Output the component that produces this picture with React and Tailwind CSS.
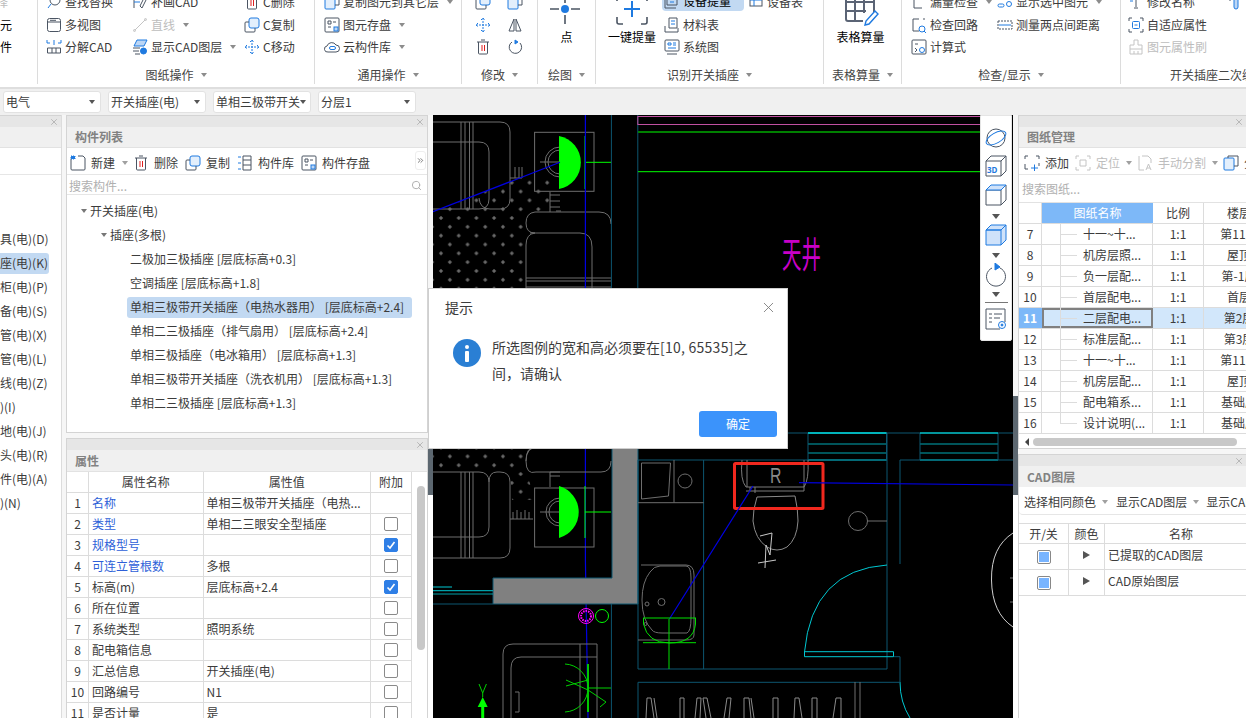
import { Search, X, ChevronsRight } from 'lucide-react';

const D = '#4b5563';
const B = '#1f7ae0';
const G = '#c4c4c4';

// 16px line icon wrapper
const Ic = ({ children, size = 16, className = '' }) => (
  <svg width={size} height={size} viewBox="0 0 16 16" fill="none" stroke={D} strokeWidth="1" className={`shrink-0 ${className}`}>
    {children}
  </svg>
);

const icons = {
  find: <Ic><circle cx="9" cy="6" r="5" /><path d="M5 10l-3 4M2 3l2-2" stroke={B} /></Ic>,
  view: <Ic><rect x="1.5" y="1.5" width="13" height="13" rx="2" /><path d="M1.5 5h13M4 3.3h6" /></Ic>,
  explode: <Ic><path d="M1.5 9h13v5h-13zM6 9v5M10 9v5" /><path d="M1 1v3h3M15 1v3h-3M8 1v5" stroke={B} /></Ic>,
  library: <Ic><path d="M6 1h8v14H6zM6 5h8M6 10h8" /><path d="M1 2h3M1 8h3M1 14h3" stroke={B} /></Ic>,
  patch: <Ic><path d="M2 2v12M10 14l4-8-2-2-4 8z" /><path d="M2 8h6" stroke={B} /></Ic>,
  line: <Ic><path d="M2.5 13.5l11-11" stroke={G} /><circle cx="2.5" cy="13.5" r="1" stroke={G} /><circle cx="13.5" cy="2.5" r="1" stroke={G} /></Ic>,
  layer: <Ic><path d="M5 1h10l-3 6H2z" fill="#bcd6f5" stroke={B} /><path d="M1 9h7M1 12h6M3 15h5" /><circle cx="11.5" cy="12" r="3" fill={B} stroke={B} /></Ic>,
  del: <Ic><path d="M2 3h12M6 1h4M3.5 3v11a1 1 0 001 1h7a1 1 0 001-1V3" /><path d="M7 6v6M9.5 6v6" stroke="#e02020" /></Ic>,
  copy: <Ic><rect x="5" y="1" width="10" height="10" rx="2" fill="#e3effc" stroke={B} /><path d="M5 5H2a1 1 0 00-1 1v8a1 1 0 001 1h8a1 1 0 001-1v-3" /></Ic>,
  move: <Ic><path d="M8 1v14M1 8h14M6 3l2-2 2 2M6 13l2 2 2-2M3 6L1 8l2 2M13 6l2 2-2 2" stroke={B} strokeDasharray="2 1" /></Ic>,
  dup: <Ic><rect x="1" y="3" width="10" height="12" rx="1" fill="#e3effc" stroke={B} /><path d="M5 3V1h10v10h-4" /></Ic>,
  save: <Ic><rect x="1" y="1" width="14" height="14" rx="1" /><path d="M4 4h3v3H4zM9 5h3M4 10h3" /><rect x="10" y="10" width="4" height="4" fill="#bcd6f5" stroke={B} /></Ic>,
  create: <Ic><path d="M4 3H2a1 1 0 00-1 1v10a1 1 0 001 1h12a1 1 0 001-1V3l-2-2H8" /><path d="M1 1h4v3H1z" fill={B} stroke={B} strokeDasharray="1 1" /></Ic>,
  cloud: <Ic><path d="M4 13h8a3.5 3.5 0 000-7 5 5 0 00-9 1 3 3 0 001 6z" /><rect x="5.5" y="7.5" width="6" height="3" rx="1.5" stroke={B} /></Ic>,
  mirror: <Ic><path d="M7 2L2 14h5zM9 2l5 12H9z" /></Ic>,
  rotate: <Ic><path d="M5 3a6.2 6.2 0 108 1" /><path d="M8 1l3 2-3 2z" fill={B} stroke={B} /></Ic>,
  sheet: <Ic><path d="M3 1h8l2 2v9H3zM1 5v10h11" /><path d="M6 6h4M6 9h4" stroke={B} /></Ic>,
  table: <Ic><rect x="2" y="3" width="12" height="9" /><path d="M2 6h12M6 3v9" stroke={B} /></Ic>,
  material: <Ic><path d="M5 1h8v10H5zM1 9v6h13v-4" /><path d="M7 4h4M7 7h4" stroke={B} /></Ic>,
  system: <Ic><rect x="1" y="1" width="14" height="11" rx="1" /><path d="M4 4h3v2H4zM9 4h3M9 6h3M4 9h8" stroke={B} /><path d="M3 15h10" /></Ic>,
  check: <Ic><path d="M3 1v13h8" /><path d="M7 2l2 3 4-4" stroke={B} /></Ic>,
  loop: <Ic><path d="M2 2h6M2 2v12h6M12 2h2" /><circle cx="11" cy="12" r="3" stroke={B} /><path d="M13 14l2 2" stroke={B} /></Ic>,
  calc: <Ic><rect x="1" y="1" width="14" height="14" rx="1" /><path d="M4 5h3M4 9l2 2-2 2" /><circle cx="11" cy="11" r="2.5" stroke={B} /></Ic>,
  show: <Ic><rect x="1" y="2" width="6" height="3" rx="1.5" /><rect x="1" y="10" width="6" height="3" rx="1.5" stroke={B} /><circle cx="12" cy="10" r="2.5" stroke={B} /></Ic>,
  measure: <Ic><path d="M1 4h14v8H1z" strokeDasharray="2 1" /><path d="M2 8h12" stroke={B} /></Ic>,
  rename: <Ic><path d="M2 3V1h12v2M8 1v12M6 14h4" /><path d="M2 7h3" stroke={B} /></Ic>,
  fit: <Ic><path d="M1 4V1h3M12 1h3v3M15 12v3h-3M4 15H1v-3" /><rect x="4.5" y="4.5" width="7" height="7" rx="1" stroke={B} /><path d="M6.5 8h3" stroke={B} /></Ic>,
  add: <Ic><path d="M1 4V1h3M12 1h3v3M15 8v3M1 9v5h3" /><path d="M7 13h7M10.5 9.5v7" stroke={B} /></Ic>,
  locate: <Ic><path d="M1 4V1h3M12 1h3v3M15 12v3h-3M4 15H1v-3M5 5h6v6H5z" stroke={G} /></Ic>,
  split: <Ic><path d="M5 1h6l3 3v4M2 1v14h5" stroke={G} /><path d="M9 15l2.5-6 2.5 6M10 13h3" stroke={G} /></Ic>,
  brush: <Ic><path d="M6 1h4v5h4v4H2V6h4zM2 10v5h12v-5M6 12v3M10 12v3" stroke={G} /></Ic>,
  side: <Ic><rect x="6" y="1" width="4" height="14" rx="2" stroke={B} fill="#bcd6f5" /><path d="M2 2v5" /></Ic>,
  point: (
    <svg width="32" height="32" viewBox="0 0 32 32" className="shrink-0">
      <circle cx="16" cy="16" r="4" fill={B} />
      <path d="M1 16h9M22 16h9M16 1v9M16 22v9" stroke={D} strokeWidth="1.6" />
    </svg>
  ),
  oneKey: (
    <svg width="32" height="32" viewBox="0 0 32 32" fill="none" className="shrink-0" stroke={D} strokeWidth="1.6">
      <path d="M1 8V3a2 2 0 012-2h4M25 1h4a2 2 0 012 2v5M31 24v5a2 2 0 01-2 2h-4M7 31H3a2 2 0 01-2-2v-5" />
      <path d="M16 8v16M8 16h16" stroke={B} strokeWidth="2" />
    </svg>
  ),
  tableBig: (
    <svg width="36" height="38" viewBox="0 0 36 38" fill="none" className="shrink-0">
      <path d="M2 2h28v19M2 2v26a2 2 0 002 2h15M2 11h28M2 20h20M11 2v28M20 2v20" stroke="#5b6475" strokeWidth="2" />
      <path d="M21 34l1-4 9-10 3 3-9 10z" stroke={B} strokeWidth="1.4" />
    </svg>
  )
};

const Caret = ({ className = 'border-t-[#8c8c8c]' }) => (
  <span className={`inline-block w-0 h-0 border-x-[3px] border-x-transparent border-t-[4px] ${className}`} />
);

const Tool = ({ icon, text, arrow, disabled }) => (
  <div className={`h-[22.5px] flex items-center gap-[3px] whitespace-nowrap ${disabled ? 'text-[#bdbdbd]' : 'text-[#3c3c3c]'}`}>
    {icons[icon]}
    <span>{text}</span>
    {arrow && <Caret className="border-t-[#8c8c8c] ml-[5px]" />}
  </div>
);

const Group = ({ w, label, pl, children }) => (
  <div className={`${w} shrink-0 h-[84px] border-r border-[#dcdcdc] flex flex-col`}>
    <div className={`-mt-[9px] h-[75px] flex ${pl}`}>{children}</div>
    <div className="h-[18px] flex items-center justify-center gap-[7px] text-[#444] whitespace-nowrap">
      {label}
      {label && <Caret className="border-t-[#8c8c8c]" />}
    </div>
  </div>
);

const Ribbon = () => (
  <div className="h-[89px] shrink-0 border-b-2 border-[#dedede] bg-white flex overflow-hidden">
    <Group w="w-[38px]" label="" pl="pl-0">
      <div className="flex flex-col -ml-[16px]">
        <div className="h-[22.5px] flex items-center text-[#bdbdbd]">选择</div>
        <div className="h-[22.5px] flex items-center pl-[4px]">图元</div>
        <div className="h-[22.5px] flex items-center pl-[4px]">构件</div>
      </div>
    </Group>
    <Group w="w-[277px]" label="图纸操作" pl="pl-[8px]">
      <div className="w-[86px]">
        <Tool icon="find" text="查找替换" />
        <Tool icon="view" text="多视图" />
        <Tool icon="explode" text="分解CAD" />
      </div>
      <div className="w-[112px]">
        <Tool icon="patch" text="补画CAD" />
        <Tool icon="line" text="直线" arrow disabled />
        <Tool icon="layer" text="显示CAD图层" arrow />
      </div>
      <div>
        <Tool icon="del" text="C删除" />
        <Tool icon="copy" text="C复制" />
        <Tool icon="move" text="C移动" />
      </div>
    </Group>
    <Group w="w-[147px]" label="通用操作" pl="pl-[9px]">
      <div>
        <Tool icon="dup" text="复制图元到其它层" arrow />
        <Tool icon="save" text="图元存盘" arrow />
        <Tool icon="cloud" text="云构件库" arrow />
      </div>
    </Group>
    <Group w="w-[76px]" label="修改" pl="pl-[13px]">
      <div className="w-[32px]">
        <Tool icon="copy" />
        <Tool icon="move" />
        <Tool icon="del" />
      </div>
      <div>
        <Tool icon="dup" />
        <Tool icon="mirror" />
        <Tool icon="rotate" />
      </div>
    </Group>
    <Group w="w-[58px]" label="绘图" pl="pl-0">
      <div className="w-full flex flex-col items-center gap-[3px]">
        <div className="mt-[2px] -ml-[4px]">{icons.point}</div>
        <span>点</span>
      </div>
    </Group>
    <Group w="w-[228px]" label="识别开关插座" pl="pl-[7px]">
      <div className="w-[61px] flex flex-col items-center gap-[3px]">
        <div className="mt-[2px] -ml-[3px]">{icons.oneKey}</div>
        <span className="whitespace-nowrap -ml-[3px]">一键提量</span>
      </div>
      <div className="w-[84px]">
        <div className="-ml-[2px] w-[82px] h-[20px] pl-[2px] bg-[#c2d9f2] rounded-sm flex items-center gap-[3px] mb-[2.5px]">
          {icons.sheet}
          <span>设备提量</span>
        </div>
        <Tool icon="material" text="材料表" />
        <Tool icon="system" text="系统图" />
      </div>
      <div>
        <Tool icon="table" text="设备表" />
      </div>
    </Group>
    <Group w="w-[78px]" label="表格算量" pl="pl-0">
      <div className="w-full flex flex-col items-center -ml-[2px]">
        <div className="h-[36px] ml-[2px]">{icons.tableBig}</div>
        <span className="mt-[1px]">表格算量</span>
      </div>
    </Group>
    <Group w="w-[219px]" label="检查/显示" pl="pl-[9px]">
      <div className="w-[86px]">
        <Tool icon="check" text="漏量检查" arrow />
        <Tool icon="loop" text="检查回路" />
        <Tool icon="calc" text="计算式" />
      </div>
      <div>
        <Tool icon="show" text="显示选中图元" arrow />
        <Tool icon="measure" text="测量两点间距离" />
      </div>
    </Group>
    <Group w="w-[208px]" label="开关插座二次编辑" pl="pl-[7px]">
      <div className="w-[100px]">
        <Tool icon="rename" text="修改名称" />
        <Tool icon="fit" text="自适应属性" />
        <Tool icon="brush" text="图元属性刷" disabled />
      </div>
      <div>
        <Tool icon="side" />
      </div>
    </Group>
  </div>
);

const Select = ({ text }) => (
  <div className="w-[98px] h-[22px] bg-white border border-[#e2e2e2] rounded-[3px] pl-[2px] pr-[5px] flex items-center justify-between whitespace-nowrap text-[#3c3c3c] overflow-hidden">
    <span>{text}</span>
    <Caret className="border-t-[#555] shrink-0" />
  </div>
);

const SelectBar = () => (
  <div className="h-[26px] shrink-0 bg-[#f0f0f0] flex items-center gap-[7px] pl-[3px]">
    <Select text="电气" />
    <Select text="开关插座(电)" />
    <Select text="单相三极带开关" />
    <Select text="分层1" />
  </div>
);

const TitleStrip = () => (
  <div className="h-[12px] shrink-0 bg-[#e6e6e6] border-t border-[#d4d4d4] flex items-center justify-end pr-[2px]">
    <X size={10} color="#a0a0a0" strokeWidth={1.6} />
  </div>
);

const Header = ({ text, h = 'h-[21px]' }) => (
  <div className={`${h} shrink-0 bg-[#f0f0f0] border-b border-[#e2e2e2] flex items-center pl-[8px] text-[#828282] font-bold`}>
    {text}
  </div>
);

const leftRows = ['具(电)(D)', '座(电)(K)', '柜(电)(P)', '备(电)(S)', '管(电)(X)', '管(电)(L)', '线(电)(Z)', ')(I)', '地(电)(J)', '头(电)(R)', '件(电)(A)', ')(N)'];

const LeftColumn = () => (
  <div className="w-[62px] shrink-0 flex flex-col bg-white border-r border-[#dcdcdc] overflow-hidden">
    <TitleStrip />
    <Header text="" />
    <div className="h-[27px] shrink-0 border-b border-[#e6e6e6]" />
    <div className="pt-[52px] pr-[12px]">
      {leftRows.map((t) => (
        <div key={t} className={`h-[24px] flex items-center whitespace-nowrap text-[#3c3c3c] ${t === '座(电)(K)' ? 'relative' : ''}`}>
          {t === '座(电)(K)' && <span className="absolute left-0 right-0 top-[2px] bottom-[1px] bg-[#c2d9f2] rounded-r-[3px]" />}
          <span className="relative">{t}</span>
        </div>
      ))}
    </div>
  </div>
);

const treeItems = [
  '二极加三极插座 [层底标高+0.3]',
  '空调插座 [层底标高+1.8]',
  '单相三极带开关插座（电热水器用） [层底标高+2.4]',
  '单相二三极插座（排气扇用） [层底标高+2.4]',
  '单相三极插座（电冰箱用） [层底标高+1.3]',
  '单相三极带开关插座（洗衣机用） [层底标高+1.3]',
  '单相二三极插座 [层底标高+1.3]'
];

const MiniTool = ({ icon, text, arrow, gap = 'mr-[7px]' }) => (
  <div className={`flex items-center gap-[5px] whitespace-nowrap ${gap}`}>
    {icons[icon]}
    <span>{text}</span>
    {arrow && <Caret className="border-t-[#a0a0a0] ml-[2px]" />}
  </div>
);

const ComponentList = () => (
  <div className="h-[318px] shrink-0 flex flex-col bg-white border-x border-b border-[#d4d4d4]">
    <TitleStrip />
    <Header text="构件列表" />
    <div className="h-[27px] shrink-0 flex items-center pl-[3px] pt-[3px] relative text-[#3c3c3c] border-b border-[#e6e6e6]">
      <MiniTool icon="create" text="新建" arrow gap="mr-[5px]" />
      <MiniTool icon="del" text="删除" />
      <MiniTool icon="copy" text="复制" />
      <MiniTool icon="library" text="构件库" />
      <MiniTool icon="save" text="构件存盘" gap="" />
      <div className="absolute right-[1px] top-[3px] w-[11px] h-[19px] border border-[#eee] rounded-[3px] flex items-center justify-center">
        <ChevronsRight size={9} color="#555" />
      </div>
    </div>
    <div className="h-[20px] shrink-0 flex items-center justify-between pl-[2px] pr-[5px] pt-[2px] text-[#b0b0b0] border-b border-[#e6e6e6]">
      <span>搜索构件...</span>
      <Search size={11} color="#aaa" />
    </div>
    <div className="flex-1 pt-[4px] text-[#3c3c3c]">
      <div className="h-[24px] flex items-center pl-[14px] gap-[3px]"><Caret className="border-t-[#777]" /><span>开关插座(电)</span></div>
      <div className="h-[24px] flex items-center pl-[34px] gap-[3px]"><Caret className="border-t-[#777]" /><span>插座(多根)</span></div>
      {treeItems.map((t, i) => (
        <div key={t} className="h-[24px] flex items-center pl-[60px]">
          <span className={`w-[285px] h-[21px] flex items-center pl-[3px] rounded-[3px] whitespace-nowrap ${i === 2 ? 'bg-[#c2d9f2]' : ''}`}>{t}</span>
        </div>
      ))}
    </div>
  </div>
);

const attrs = [
  ['名称', '单相三极带开关插座（电热...', null, true],
  ['类型', '单相二三眼安全型插座', false, true],
  ['规格型号', '', true, true],
  ['可连立管根数', '多根', false, true],
  ['标高(m)', '层底标高+2.4', true, false],
  ['所在位置', '', false, false],
  ['系统类型', '照明系统', false, false],
  ['配电箱信息', '', false, false],
  ['汇总信息', '开关插座(电)', false, false],
  ['回路编号', 'N1', false, false],
  ['是否计量', '是', false, false]
];

const Checkbox = ({ on }) => (
  <span className={`w-[14px] h-[14px] rounded-[2px] border flex items-center justify-center ${on ? 'bg-[#2f7fe6] border-[#2f7fe6]' : 'bg-white border-[#8a8a8a]'}`}>
    {on && (
      <svg width="10" height="10" viewBox="0 0 10 10" fill="none">
        <path d="M1.5 5.5l2.5 2.5 4.5-6" stroke="#fff" strokeWidth="1.6" />
      </svg>
    )}
  </span>
);

const Attributes = () => (
  <div className="flex-1 min-h-0 mt-[5px] flex flex-col bg-white border-x border-[#d4d4d4] overflow-hidden">
    <TitleStrip />
    <Header text="属性" h="h-[22px]" />
    <div className="flex-1 flex relative">
      <div className="w-[345px] shrink-0 text-[#3c3c3c]">
        <div className="h-[21px] flex text-center border-b border-[#dcdcdc]">
          <div className="w-[22px] border-r border-[#dcdcdc]" />
          <div className="w-[115px] border-r border-[#dcdcdc] leading-[20px]">属性名称</div>
          <div className="w-[168px] border-r border-[#dcdcdc] leading-[20px]">属性值</div>
          <div className="w-[41px] border-r border-[#dcdcdc] leading-[20px]">附加</div>
        </div>
        {attrs.map(([name, val, on, blue], i) => (
          <div key={name} className="h-[21px] flex border-b border-[#dcdcdc]">
            <div className="w-[22px] border-r border-[#dcdcdc] flex items-center justify-center">{i + 1}</div>
            <div className={`w-[115px] border-r border-[#dcdcdc] flex items-center pl-[3px] ${blue ? 'text-[#2e5fd8]' : ''}`}>{name}</div>
            <div className="w-[168px] border-r border-[#dcdcdc] flex items-center pl-[3px] whitespace-nowrap overflow-hidden">{val}</div>
            <div className="w-[41px] border-r border-[#dcdcdc] flex items-center justify-center">
              {on !== null && <Checkbox on={on} />}
            </div>
          </div>
        ))}
      </div>
      <div className="absolute left-[350px] top-[14px] w-[8px] h-[164px] bg-[#c8c8c8] rounded-full" />
    </div>
  </div>
);

const DrawingCell = ({ n, name, scale, floor, active, last }) => (
  <div className={`h-[21px] flex border-b border-[#dcdcdc] ${active ? 'bg-[#d2e7fb]' : ''}`}>
    <div className={`w-[23px] shrink-0 flex items-center justify-center border-r ${active ? 'bg-[#7db8f8] text-white font-bold border-[#7db8f8]' : 'border-[#dcdcdc]'}`}>{n}</div>
    <div className={`w-[111px] shrink-0 relative flex items-center pl-[41px] border-r border-[#dcdcdc] ${active ? 'outline-2 -outline-offset-2 outline-[#808080]' : ''}`}>
      <span className="absolute left-[18px] top-0 w-[17px] h-[11px] border-l border-b border-[#dcdcdc]" />
      {!last && <span className="absolute left-[18px] top-[11px] bottom-[-1px] border-l border-[#dcdcdc]" />}
      <span className="whitespace-nowrap">{name}</span>
    </div>
    <div className="w-[51px] shrink-0 flex items-center justify-center border-r border-[#dcdcdc]">{scale}</div>
    <div className="w-[70px] shrink-0 flex items-center justify-center whitespace-nowrap">{floor}</div>
  </div>
);

const drawings = [
  [7, '十一~十...', '第11层'],
  [8, '机房层照...', '屋顶'],
  [9, '负一层配...', '第-1层'],
  [10, '首层配电...', '首层'],
  [11, '二层配电...', '第2层'],
  [12, '标准层配...', '第3层'],
  [13, '十一~十...', '第11层'],
  [14, '机房层配...', '屋顶'],
  [15, '配电箱系...', '基础层'],
  [16, '设计说明(...', '基础层']
];

const RightColumn = () => (
  <div className="flex-1 min-w-0 flex flex-col overflow-hidden text-[#3c3c3c]">
    <div className="h-[334px] shrink-0 flex flex-col bg-white border-l border-b border-[#d4d4d4]">
      <TitleStrip />
      <Header text="图纸管理" />
      <div className="h-[27px] shrink-0 flex items-center pl-[5px] pt-[3px] whitespace-nowrap overflow-hidden border-b border-[#e6e6e6]">
        <MiniTool icon="add" text="添加" gap="mr-[6px]" />
        <div className="flex items-center gap-[5px] text-[#bdbdbd] mr-[5px]">{icons.locate}<span>定位</span><Caret className="border-t-[#a0a0a0] ml-[1px]" /></div>
        <div className="flex items-center gap-[5px] text-[#bdbdbd] mr-[5px]">{icons.split}<span>手动分割</span><Caret className="border-t-[#a0a0a0] ml-[1px]" /></div>
        <MiniTool icon="dup" text="分层" />
      </div>
      <div className="h-[28px] shrink-0 flex items-center pl-[3px] text-[#b0b0b0] border-b border-[#e2e2e2]">搜索图纸...</div>
      <div className="flex-1 overflow-hidden">
        <div className="h-[21px] flex border-b border-[#dcdcdc] w-[255px]">
          <div className="w-[23px] border-r border-[#dcdcdc]" />
          <div className="w-[111px] bg-[#7db8f8] text-white flex items-center justify-center">图纸名称</div>
          <div className="w-[51px] flex items-center justify-center border-r border-[#dcdcdc]">比例</div>
          <div className="w-[70px] flex items-center justify-center">楼层</div>
        </div>
        <div className="w-[255px]">
          {drawings.map(([n, name, floor], i) => (
            <DrawingCell key={n} n={n} name={name} scale="1:1" floor={floor} active={n === 11} last={i === drawings.length - 1} />
          ))}
        </div>
        <div className="h-[15px] flex items-center pl-[6px] gap-[4px]">
          <span className="w-0 h-0 border-y-[4px] border-y-transparent border-r-[4px] border-r-[#444]" />
          <span className="w-[204px] h-[8px] bg-[#c8c8c8] rounded-full" />
        </div>
      </div>
    </div>
    <div className="h-[5px] shrink-0" />
    <div className="flex-1 min-h-0 flex flex-col bg-white border-l border-[#d4d4d4]">
      <TitleStrip />
      <div className="h-[21px] shrink-0 bg-[#f0f0f0] flex items-center pl-[8px] text-[#828282] font-bold">CAD图层</div>
      <div className="h-[28px] shrink-0 flex items-center pl-[5px] pt-[3px] whitespace-nowrap overflow-hidden border-b border-[#e6e6e6] rounded-bl-[4px]">
        <span>选择相同颜色</span><Caret className="border-t-[#a0a0a0] ml-[6px] mr-[8px]" />
        <span>显示CAD图层</span><Caret className="border-t-[#a0a0a0] ml-[6px] mr-[7px]" />
        <span>显示CAD图层</span>
      </div>
      <div className="mt-[8px] w-[260px]">
        <div className="h-[21px] flex border-t border-b border-[#dcdcdc] text-center leading-[19px]">
          <div className="w-[50px] border-r border-[#dcdcdc]">开/关</div>
          <div className="w-[36px] border-r border-[#dcdcdc]">颜色</div>
          <div className="w-[152px]">名称</div>
        </div>
        {['已提取的CAD图层', 'CAD原始图层'].map((t) => (
          <div key={t} className="h-[26px] flex border-b border-[#dcdcdc]">
            <div className="w-[50px] border-r border-[#dcdcdc] flex items-center justify-center">
              <span className="w-[14px] h-[14px] mt-[1px] border border-[#888] rounded-[2px] p-[1px] bg-white">
                <span className="block w-full h-full bg-[#78b4ff]" />
              </span>
            </div>
            <div className="w-[36px] border-r border-[#dcdcdc] flex items-center justify-center">
              <span className="w-0 h-0 border-y-[4px] border-y-transparent border-l-[7px] border-l-[#555] -mt-[3px]" />
            </div>
            <div className="pl-[3px] flex items-center -mt-[3px]">{t}</div>
          </div>
        ))}
      </div>
    </div>
  </div>
);

// floating view cube strip on the canvas
const ViewStrip = () => (
  <div className="absolute left-[547px] top-0 w-[32px] h-[226px] bg-white rounded-b-[2px] border border-[#e5e5e5] flex flex-col items-center pt-[11px]">
    <svg width="22" height="22" viewBox="0 0 22 22" fill="none" stroke={D}><ellipse cx="11" cy="11" rx="9" ry="9" /><ellipse cx="11" cy="11" rx="11" ry="5" transform="rotate(-30 11 11)" stroke={B} /></svg>
    <svg width="22" height="22" viewBox="0 0 22 22" fill="none" stroke={D} className="mt-[6px]">
      <path d="M1 6h15v15H1zM1 6l5-5h15v15l-5 5M16 6l5-5" />
      <text x="2" y="18" fontSize="8" fontWeight="700" fill={B} stroke="none" fontFamily="Noto Sans">3D</text>
    </svg>
    <svg width="22" height="22" viewBox="0 0 22 22" fill="none" stroke={D} className="mt-[7px]">
      <path d="M1 6h15v15H1zM16 6l5-5v15l-5 5" /><path d="M1 6l5-5h15l-5 5z" fill="#cfe2fa" stroke={B} />
    </svg>
    <Caret className="border-t-[#555] mt-[8px] border-x-[4px] border-t-[5px]" />
    <svg width="22" height="22" viewBox="0 0 22 22" fill="#cfe2fa" stroke={B} className="mt-[5px]">
      <path d="M1 6h15v15H1zM16 6l5-5v15l-5 5M1 6l5-5h15l-5 5z" />
    </svg>
    <Caret className="border-t-[#555] mt-[7px] border-x-[4px] border-t-[5px]" />
    <svg width="22" height="24" viewBox="0 0 22 24" fill="none" stroke={D} className="mt-[5px]">
      <path d="M7 5a9.5 9.5 0 108 0" /><path d="M10 0l5 4-5 3z" fill={B} stroke={B} />
    </svg>
    <Caret className="border-t-[#555] mt-[5px] border-x-[4px] border-t-[5px]" />
    <div className="w-[23px] border-t border-[#777] mt-[5px]" />
    <svg width="22" height="22" viewBox="0 0 22 22" fill="none" stroke={D} className="mt-[5px]">
      <path d="M15 21H1V1h19v13M4 6h3M9 6h8M4 10h3M9 10h6M4 14h3" /><circle cx="17" cy="17" r="3.5" stroke={B} /><circle cx="17" cy="17" r="1" fill={B} stroke={B} />
    </svg>
  </div>
);

const gray = '#6e6e6e';
const teal = '#0d5670';
const cyan = '#00c8d2';

const CadDrawing = () => (
  <svg viewBox="433 115 580 603" className="w-full h-full block" fill="none">
    <defs>
      <pattern id="dots" x="441" y="218" width="17.7" height="17.66" patternUnits="userSpaceOnUse">
        <path d="M-2 0h4M0-2v4M6.85 8.83h4M8.85 6.83v4M15.7 0h4M17.7-2v4M-2 17.66h4M0 15.66v4M15.7 17.66h4M17.7 15.66v4" stroke="#8a8a8a" />
      </pattern>
    </defs>
    {/* upper living room */}
    <polygon points="433,212 515,180 550,180 550,214 525,214 525,300 433,300" fill="url(#dots)" />
    <polygon points="433,447 525,447 525,470 536,500 512,500 510,468 433,468" fill="url(#dots)" />
    <g stroke={gray}>
      <path d="M433 122h67q10 0 10 10v67q0 10-10 10h-10q-10 0-11-11M433 142h46q10 0 10 10v47q0 10-10 10h-46M461 122v87M465 122v87M469.5 122v87M473 122v87" />
      <path d="M510 178h12v-11M515 178v-11M519 178v-11" />
      <rect x="534.6" y="132.3" width="59.4" height="59" />
      <path d="M560 150a12 12 0 000 24M560 147a15 15 0 000 30M540 162h20" />
      <path d="M550 192v20M550 195h10M550 201h10M550 207h10M556 211h5" />
      <path d="M535 233q-9 0-9-10t9-11h64q12 0 12 12M535 233q-9 1-9 12v45M530 233h50q12 0 12 14v42M526 278h85M526 281h85M526 287h85" />
    </g>
    <path d="M611.4 115v175M637.8 115v175" stroke={teal} />
    <rect x="637.8" y="116.5" width="350" height="8" stroke="#c050a0" />
    <path d="M638 132h350" stroke="#008000" strokeWidth="2" />
    <path d="M638 171.7h350" stroke="#00ff00" />
    <path d="M559 136A27 27 0 0 1 559 189Z" fill="#00ff00" />
    <path d="M585 136v53M585 162.3h26" stroke="#00ff00" />
    <path d="M585.4 115V560L588 718" stroke="#0000e0" strokeWidth="1.2" />
    <path d="M433 211.7L560 162.3" stroke="#0000e0" strokeWidth="1.2" />
    <text x="0" y="0" transform="translate(782 268) scale(0.54 1)" fontSize="36" fill="#c800c8" fontFamily="Noto Sans CJK SC">天井</text>

    {/* lower living room */}
    <path d="M612 447h26v157H493v-26h119z" fill="#808080" />
    <path d="M612 447v131H493v26h145V447" stroke={teal} />
    <path d="M433 604h60M611.4 604v114" stroke={teal} />
    <path d="M433 587h19" stroke={cyan} />
    <path d="M433 590.7h60M433 594h60" stroke="#00a0a8" strokeWidth="1.2" />
    <g stroke={gray}>
      <path d="M433 472h46q10 0 10 10v45q0 10-10 10h-46M433 558h67q10 0 10-10v-66q0-10-10-10h-3q-8 0-8 10M461 472v86M465 472v86M469.5 472v86M473 472v86" />
      <path d="M510 519h23M513 519v-7M517 519v-9M521 519v-7M525 519v-9M529 519v-7" />
      <rect x="534.6" y="488" width="59.4" height="59" />
      <path d="M560 498a14 14 0 000 28M560 501a11 11 0 000 22M540 512h20" />
      <path d="M550 472v15M550 476h10M550 472h10" />
      <path d="M526 461q0-14 12-14h-3q-9 0-9 14t10 11h65q10 0 10-11" />
      <path d="M503 718v-64q0-10 10-10h84v74M511 718v-50q0-11 10-11h76M580 644v74M515 712h4v-20h-4" />
    </g>
    <path d="M559 486A27 27 0 0 1 559 538Z" fill="#00ff00" />
    <path d="M585 486v52M585 512h26" stroke="#00ff00" />
    <circle cx="586" cy="616" r="7.5" stroke="#ff00ff" strokeWidth="1" />
    <circle cx="586" cy="616" r="5" stroke="#ff00ff" strokeWidth="2" strokeDasharray="1.5 1" />
    <circle cx="602" cy="616" r="6.5" stroke="#00ff00" />
    <path d="M588 664v48" stroke="#00c800" strokeWidth="2" />
    <path d="M565 664a24 24 0 0 1 23 24a24 24 0 0 1-23 24M566 686l22-6M566 680l22 10 18 12-6 5M588 688h23" stroke="#00d000" />
    <path d="M482.7 718v-13" stroke="#00ff00" strokeWidth="3" />
    <path d="M482.7 697l-5 10h10z" fill="#00ff00" />
    <path d="M479 684l3.7 9 3.7-9M482.7 693v4" stroke="#00d000" />

    {/* bathroom */}
    <path d="M638 460h249M638 460v209h249V433M703.6 460v209M900 460v104M900 460h113M787 433h226" stroke={teal} />
    <g stroke="#00a8b4">
      <path d="M808 433h78.5M808 444h78.5M808 453h78.5M808 460h78.5M920 444h78M920 453h78M920 460h78" />
      <path d="M808 433v27M886.5 433v27M920 433v27M998 433v27" stroke={teal} />
    </g>
    <path d="M808 433h78.5M920 433h78" stroke="#00ffff" />
    <g stroke={gray}>
      <path d="M638 502.7h65.6M674 460v42.7" />
      <path d="M641.5 463h29l-2 33-27 3z" />
      <circle cx="685" cy="481" r="7" />
      <path d="M641 565h45q8 0 8 10v60q0 5-8 5h-48" />
      <path d="M650 572q-8 10-8 28 0 20 10 30 2 3 10 3h25q4-2 4-15v-40q0-12-5-12h-26q-6 0-10 6z" />
      <circle cx="647" cy="604" r="2" /><circle cx="661.5" cy="602" r="3.5" /><circle cx="645.5" cy="624" r="1.5" />
      <path d="M742 460q-2 20 4 27h58q5-7 4-27M747 460v27M804 460v27M746 491h58v-4M750 491v-4M755 487v6" stroke="#7a7a7a" />
      <path d="M757 497q-4 12-4 24 2 18 14 26 10 6 20 0 10-8 11-26 0-12-3-25z" stroke="#8a8a8a" />
      <circle cx="858" cy="521" r="9.5" />
      <path d="M867 521h20" />
    </g>
    <text x="0" y="0" transform="translate(770 483) scale(0.72 1)" fontSize="22" fill="#8a8a8a" fontFamily="Liberation Sans">R</text>
    <path d="M760 536l12-3-2 22-4-10-1 23M758 563l18-3" stroke="#c8c8c8" />
    <rect x="734.5" y="463.5" width="88.5" height="45" rx="1" stroke="#f0281e" strokeWidth="3" />
    <path d="M799 482.7L1013 485M753 486L669.4 619" stroke="#0000e0" strokeWidth="1.2" />
    <path d="M643 618h53M643 642.7h53M669 619v50" stroke="#00e000" />
    <path d="M643.5 618v6q4 19 26 19q24 0 26-19v-6" stroke="#00e000" />
    <path d="M887 565Q812 570 804.5 652" stroke={cyan} />
    <path d="M804.5 651.7h89v5h-89zM900 682q0 20 10 36" stroke={cyan} />
    <path d="M894 656.7h6V682M638 682.3h262M638 682.3V718" stroke={teal} />
    <path d="M855 682v36M860 682v36" stroke={gray} />
    <path
      d="M646 718l1-20h4l3 20M654 698l3 20M680 718v-20h4v20M695 718l2-20h4l-1 20M706 718l-3-20h4l4 20M724 718l3-20h4l-2 20M744 718v-20h5l2 20M754 718l-3-20M773 718v-20h5v20M794 718l1-20h4l3 20M812 718v-20h5v20M833 718l3-20h5v20"
      stroke="#8a8a8a"
    />
    <path d="M1013 533q-22 14-21.5 47t21.5 47" stroke="#d0d0d0" />
    <path d="M1010 578h4M1010 602h4" stroke={gray} />
  </svg>
);

const Gutter = () => (
  <div className="w-[5px] shrink-0 flex flex-col bg-[#f6f6f6]">
    <div className="h-[281px] shrink-0" />
    <div className="h-[99px] shrink-0 bg-[#5c6770]" />
    <div className="flex-1 bg-white" />
  </div>
);

const Dialog = () => (
  <div className="absolute left-[428px] top-[288px] w-[360px] h-[161px] bg-white border border-[#cfcfcf] flex flex-col text-[#3c3c3c]">
    <div className="h-[36px] shrink-0 flex items-center justify-between pl-[16px] pr-[10px] text-[14px]">
      <span>提示</span>
      <X size={17} color="#777" strokeWidth={1.2} />
    </div>
    <div className="flex-1 flex pl-[24px] pr-[20px] pt-[9px]">
      <div className="w-[28px] h-[28px] shrink-0 rounded-full bg-[#2a7fd4] flex items-center justify-center mt-[5px]">
        <svg width="6" height="18" viewBox="0 0 6 18" fill="#fff">
          <circle cx="3" cy="3" r="2" />
          <rect x="1" y="7" width="4" height="11" rx="1" />
        </svg>
      </div>
      <p className="ml-[11px] text-[14px] leading-[26px] whitespace-nowrap">
        所选图例的宽和高必须要在<span className="tracking-[0.25px]">[10, 65535]</span>之
        <br />
        间，请确认
      </p>
    </div>
    <div className="h-[37px] shrink-0 flex justify-end pr-[10px]">
      <span className="w-[78px] h-[26px] bg-[#3b93fb] rounded-[3px] flex items-center justify-center text-white">确定</span>
    </div>
  </div>
);

export default function App() {
  return (
    <div className="w-[1246px] h-[718px] relative overflow-hidden flex flex-col bg-white text-[12px] font-['Noto_Sans_CJK_SC','Noto_Sans',sans-serif]">
      <Ribbon />
      <SelectBar />
      <div className="flex-1 min-h-0 flex bg-[#f6f6f6]">
        <LeftColumn />
        <div className="w-[4px] shrink-0" />
        <div className="w-[362px] shrink-0 flex flex-col text-[#3c3c3c]">
          <ComponentList />
          <Attributes />
        </div>
        <Gutter />
        <div className="w-[580px] shrink-0 bg-black relative overflow-hidden">
          <CadDrawing />
          <ViewStrip />
        </div>
        <Gutter />
        <RightColumn />
      </div>
      <Dialog />
    </div>
  );
}
